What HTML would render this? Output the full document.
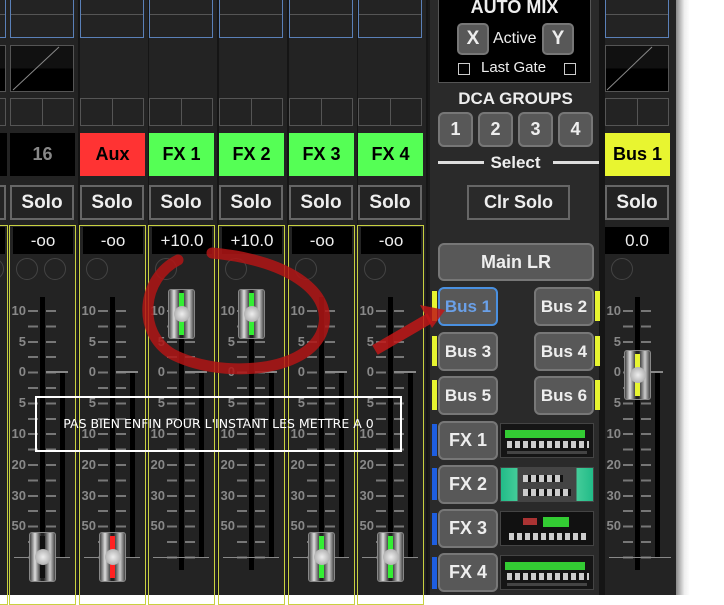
<!DOCTYPE html>
<html><head><meta charset="utf-8"><style>
*{margin:0;padding:0;box-sizing:border-box}
body{width:724px;height:595px;overflow:hidden;background:#fff;font-family:"Liberation Sans",sans-serif;position:relative}
.bg{position:absolute;left:0;top:0;width:676px;height:595px;background:#151515}
.shadow{position:absolute;left:676px;top:0;width:14px;height:595px;background:linear-gradient(90deg,#888,#eee 60%,#fff)}
.st{position:absolute;top:0;width:68px;height:595px;background:#232323}
.st>*{position:absolute}
.tb{left:0;top:-2px;width:64px;height:40px;border:1px solid #5a80b8}
.tb:after{content:"";position:absolute;left:0;right:0;top:15px;height:1px;background:#555}
.gr{left:0;top:45px;width:64px;height:47px;border:1px solid #555;background:linear-gradient(#111 50%,#000 50%)}
.tc{left:0;top:98px;width:64px;height:28px;border:1px solid #555}
.tc:after{content:"";position:absolute;left:31px;top:0;bottom:0;width:1px;background:#555}
.lb{left:0;top:133px;width:65px;height:43px;font-weight:bold;font-size:18px;line-height:43px;text-align:center;color:#000}
.so{left:0;top:185px;width:64px;height:35px;border:2px solid #666;color:#eee;font-weight:bold;font-size:19px;line-height:31px;text-align:center}
.yo{left:-1px;top:225px;width:67px;height:380px;border:1px solid #c8d040}
.va{left:3px;top:227px;width:60px;height:27px;background:#000;color:#eee;font-size:17px;line-height:27px;text-align:center}
.ci{left:6px;top:258px;width:22px;height:22px;border:1px solid #444;border-radius:50%}
.tk{left:18px;top:310px;width:10px;height:250px;background:repeating-linear-gradient(#777 0 2px,transparent 2px 15.4px)}
.tk2{left:36px;top:310px;width:10px;height:250px;background:repeating-linear-gradient(#777 0 2px,transparent 2px 15.4px)}
.tr{left:30px;top:297px;width:5px;height:273px;background:#000}
.me{left:50px;top:372px;width:5px;height:186px;background:#000}
.bl{left:4px;top:557px;width:56px;height:1px;background:#888}
.zl{left:36px;top:371px;width:22px;height:2px;background:#888}
.n{color:#888;font-size:13px;font-weight:bold;left:-4px;width:20px;text-align:right}
.fc{left:19px;width:27px;height:50px;border-radius:3px;background:linear-gradient(90deg,#444,#ddd 20%,#222 45%,#222 55%,#ccc 80%,#444);border:1px solid #888}
.fc i{position:absolute;left:10px;top:3px;width:5px;height:42px}
.fc b{position:absolute;left:5px;top:16px;width:16px;height:16px;border-radius:50%;background:radial-gradient(#eee,#999)}
.rp{position:absolute;left:428px;top:0;width:171px;height:595px;background:#2a2a2a;border-left:2px solid #1a1a1a}
.rp>*{position:absolute}
.btn{background:#585858;border:2px solid #777;border-radius:6px;color:#eee;font-weight:bold;text-align:center}
.rk{background:#222;border:1px solid #444;overflow:hidden}
.kn{position:absolute;height:7px;background:repeating-linear-gradient(90deg,#ccc 0 5px,#111 5px 8px)}
</style></head><body>
<div class="bg"></div>

<div class="st" style="left:-58px">
<div class="tb"></div><div class="gr"></div><div class="tc"></div><div class="lb" style="background:#000"></div><div class="so"></div><div class="yo"></div><div class="va"></div><div class="ci" style="left:40px"></div>
<div class="tk2"></div><div class="tr" style="left:53px"></div>
</div>

<div class="st" style="left:10px">
<div class="tb"></div><div class="gr"><svg width="62" height="45" style="position:absolute;left:0;top:0"><line x1="2" y1="44" x2="48" y2="1" stroke="#888"/></svg></div><div class="tc"></div>
<div class="lb" style="background:#000;color:#888">16</div><div class="so">Solo</div><div class="yo"></div><div class="va">-oo</div><div class="ci"></div><div class="ci" style="left:34px"></div>
<div class="tk"></div><div class="tk2"></div><div class="tr"></div><div class="me"></div><div class="bl"></div><div class="zl"></div>
<div class="n" style="top:303px">10</div><div class="n" style="top:334px">5</div><div class="n" style="top:364px">0</div><div class="n" style="top:395px">5</div><div class="n" style="top:426px">10</div><div class="n" style="top:457px">20</div><div class="n" style="top:488px">30</div><div class="n" style="top:518px">50</div>
<div class="fc" style="top:532px"><i style="background:#111"></i><b></b></div>
</div>

<div class="st" style="left:80px">
<div class="tb"></div><div class="tc"></div>
<div class="lb" style="background:#f33">Aux</div><div class="so">Solo</div><div class="yo"></div><div class="va">-oo</div><div class="ci"></div>
<div class="tk"></div><div class="tk2"></div><div class="tr"></div><div class="me"></div><div class="bl"></div><div class="zl"></div>
<div class="n" style="top:303px">10</div><div class="n" style="top:334px">5</div><div class="n" style="top:364px">0</div><div class="n" style="top:395px">5</div><div class="n" style="top:426px">10</div><div class="n" style="top:457px">20</div><div class="n" style="top:488px">30</div><div class="n" style="top:518px">50</div>
<div class="fc" style="top:532px"><i style="background:#f22"></i><b></b></div>
</div>

<div class="st" style="left:149px">
<div class="tb"></div><div class="tc"></div>
<div class="lb" style="background:#5f5">FX 1</div><div class="so">Solo</div><div class="yo"></div><div class="va">+10.0</div><div class="ci"></div>
<div class="tk"></div><div class="tk2"></div><div class="tr"></div><div class="me"></div><div class="bl"></div><div class="zl"></div>
<div class="n" style="top:303px">10</div><div class="n" style="top:334px">5</div><div class="n" style="top:364px">0</div><div class="n" style="top:395px">5</div><div class="n" style="top:426px">10</div><div class="n" style="top:457px">20</div><div class="n" style="top:488px">30</div><div class="n" style="top:518px">50</div>
<div class="fc" style="top:289px"><i style="background:#3e3"></i><b></b></div>
</div>

<div class="st" style="left:219px">
<div class="tb"></div><div class="tc"></div>
<div class="lb" style="background:#5f5">FX 2</div><div class="so">Solo</div><div class="yo"></div><div class="va">+10.0</div><div class="ci"></div>
<div class="tk"></div><div class="tk2"></div><div class="tr"></div><div class="me"></div><div class="bl"></div><div class="zl"></div>
<div class="n" style="top:303px">10</div><div class="n" style="top:334px">5</div><div class="n" style="top:364px">0</div><div class="n" style="top:395px">5</div><div class="n" style="top:426px">10</div><div class="n" style="top:457px">20</div><div class="n" style="top:488px">30</div><div class="n" style="top:518px">50</div>
<div class="fc" style="top:289px"><i style="background:#3e3"></i><b></b></div>
</div>

<div class="st" style="left:289px">
<div class="tb"></div><div class="tc"></div>
<div class="lb" style="background:#5f5">FX 3</div><div class="so">Solo</div><div class="yo"></div><div class="va">-oo</div><div class="ci"></div>
<div class="tk"></div><div class="tk2"></div><div class="tr"></div><div class="me"></div><div class="bl"></div><div class="zl"></div>
<div class="n" style="top:303px">10</div><div class="n" style="top:334px">5</div><div class="n" style="top:364px">0</div><div class="n" style="top:395px">5</div><div class="n" style="top:426px">10</div><div class="n" style="top:457px">20</div><div class="n" style="top:488px">30</div><div class="n" style="top:518px">50</div>
<div class="fc" style="top:532px"><i style="background:#3e3"></i><b></b></div>
</div>

<div class="st" style="left:358px">
<div class="tb"></div><div class="tc"></div>
<div class="lb" style="background:#5f5">FX 4</div><div class="so">Solo</div><div class="yo"></div><div class="va">-oo</div><div class="ci"></div>
<div class="tk"></div><div class="tk2"></div><div class="tr"></div><div class="me"></div><div class="bl"></div><div class="zl"></div>
<div class="n" style="top:303px">10</div><div class="n" style="top:334px">5</div><div class="n" style="top:364px">0</div><div class="n" style="top:395px">5</div><div class="n" style="top:426px">10</div><div class="n" style="top:457px">20</div><div class="n" style="top:488px">30</div><div class="n" style="top:518px">50</div>
<div class="fc" style="top:532px"><i style="background:#3e3"></i><b></b></div>
</div>

<div class="st" style="left:605px;width:71px">
<div class="tb"></div><div class="gr"><svg width="62" height="45" style="position:absolute;left:0;top:0"><line x1="1" y1="44" x2="46" y2="1" stroke="#888"/></svg></div><div class="tc"></div>
<div class="lb" style="background:#e8f530">Bus 1</div><div class="so">Solo</div><div class="va" style="left:0;width:64px">0.0</div><div class="ci"></div>
<div class="tk"></div><div class="tk2"></div><div class="tr"></div><div class="me"></div><div class="bl" style="width:62px"></div><div class="zl"></div>
<div class="n" style="top:303px">10</div><div class="n" style="top:334px">5</div><div class="n" style="top:364px">0</div><div class="n" style="top:395px">5</div><div class="n" style="top:426px">10</div><div class="n" style="top:457px">20</div><div class="n" style="top:488px">30</div><div class="n" style="top:518px">50</div>
<div class="fc" style="top:350px"><i style="background:#e8f530"></i><b></b></div>
</div>

<div class="rp">
<div style="left:8px;top:-5px;width:153px;height:88px;background:#000;border:1px solid #555"></div>
<div style="left:8px;top:-3px;width:153px;text-align:center;color:#eee;font-weight:bold;font-size:18px">AUTO MIX</div>
<div class="btn" style="left:27px;top:23px;width:32px;height:32px;font-size:19px;line-height:28px;border-radius:5px">X</div>
<div style="left:63px;top:30px;color:#eee;font-size:16px">Active</div>
<div class="btn" style="left:112px;top:23px;width:32px;height:32px;font-size:19px;line-height:28px;border-radius:5px">Y</div>
<div style="left:28px;top:63px;width:12px;height:12px;border:1px solid #ccc"></div>
<div style="left:51px;top:59px;color:#eee;font-size:15px">Last Gate</div>
<div style="left:134px;top:63px;width:12px;height:12px;border:1px solid #ccc"></div>
<div style="left:0;top:89px;width:171px;text-align:center;color:#eee;font-weight:bold;font-size:17px">DCA GROUPS</div>
<div class="btn" style="left:8px;top:112px;width:35px;height:35px;font-size:18px;line-height:31px">1</div>
<div class="btn" style="left:48px;top:112px;width:35px;height:35px;font-size:18px;line-height:31px">2</div>
<div class="btn" style="left:88px;top:112px;width:35px;height:35px;font-size:18px;line-height:31px">3</div>
<div class="btn" style="left:128px;top:112px;width:35px;height:35px;font-size:18px;line-height:31px">4</div>
<div style="left:8px;top:161px;width:46px;height:3px;background:#ddd"></div>
<div style="left:0;top:153px;width:171px;text-align:center;color:#eee;font-weight:bold;font-size:17px">Select</div>
<div style="left:123px;top:161px;width:46px;height:3px;background:#ddd"></div>
<div style="left:37px;top:185px;width:103px;height:35px;border:2px solid #666;color:#eee;font-weight:bold;font-size:18px;line-height:31px;text-align:center">Clr Solo</div>
<div class="btn" style="left:8px;top:243px;width:156px;height:38px;font-size:18px;line-height:34px">Main LR</div>

<div style="left:2px;top:291px;width:5px;height:30px;background:#e8f530"></div>
<div class="btn" style="left:8px;top:287px;width:60px;height:39px;font-size:17px;line-height:35px;border-color:#4a90e0;color:#6aa0e8">Bus 1</div>
<div class="btn" style="left:104px;top:287px;width:60px;height:39px;font-size:17px;line-height:35px">Bus 2</div>
<div style="left:165px;top:291px;width:5px;height:30px;background:#e8f530"></div>
<div style="left:2px;top:336px;width:5px;height:30px;background:#e8f530"></div>
<div class="btn" style="left:8px;top:332px;width:60px;height:39px;font-size:17px;line-height:35px">Bus 3</div>
<div class="btn" style="left:104px;top:332px;width:60px;height:39px;font-size:17px;line-height:35px">Bus 4</div>
<div style="left:165px;top:336px;width:5px;height:30px;background:#e8f530"></div>
<div style="left:2px;top:380px;width:5px;height:30px;background:#e8f530"></div>
<div class="btn" style="left:8px;top:376px;width:60px;height:39px;font-size:17px;line-height:35px">Bus 5</div>
<div class="btn" style="left:104px;top:376px;width:60px;height:39px;font-size:17px;line-height:35px">Bus 6</div>
<div style="left:165px;top:380px;width:5px;height:30px;background:#e8f530"></div>

<div style="left:2px;top:424px;width:5px;height:32px;background:#1e5ee0"></div>
<div class="btn" style="left:8px;top:421px;width:60px;height:39px;font-size:18px;line-height:35px">FX 1</div>
<div class="rk" style="left:70px;top:423px;width:94px;height:35px;background:#151515"><div style="position:absolute;left:4px;top:6px;width:80px;height:8px;background:#3c3"></div><div class="kn" style="left:6px;top:17px;width:82px"></div><div style="position:absolute;left:6px;top:27px;width:80px;height:3px;background:#444"></div></div>
<div style="left:2px;top:468px;width:5px;height:32px;background:#1e5ee0"></div>
<div class="btn" style="left:8px;top:465px;width:60px;height:39px;font-size:18px;line-height:35px">FX 2</div>
<div class="rk" style="left:70px;top:467px;width:94px;height:35px;background:linear-gradient(90deg,#2b8 0%,#4c9 18%,#444 18%,#444 82%,#4c9 82%,#2b8)"><div class="kn" style="left:22px;top:7px;width:40px"></div><div class="kn" style="left:22px;top:21px;width:48px"></div></div>
<div style="left:2px;top:513px;width:5px;height:32px;background:#1e5ee0"></div>
<div class="btn" style="left:8px;top:509px;width:60px;height:39px;font-size:18px;line-height:35px">FX 3</div>
<div class="rk" style="left:70px;top:511px;width:94px;height:35px;background:#111"><div style="position:absolute;left:22px;top:6px;width:14px;height:7px;background:#a33"></div><div style="position:absolute;left:42px;top:5px;width:26px;height:10px;background:#3c3"></div><div class="kn" style="left:8px;top:21px;width:80px"></div></div>
<div style="left:2px;top:557px;width:5px;height:32px;background:#1e5ee0"></div>
<div class="btn" style="left:8px;top:553px;width:60px;height:39px;font-size:18px;line-height:35px">FX 4</div>
<div class="rk" style="left:70px;top:555px;width:94px;height:35px;background:#151515"><div style="position:absolute;left:4px;top:6px;width:80px;height:8px;background:#3c3"></div><div class="kn" style="left:6px;top:17px;width:82px"></div><div style="position:absolute;left:6px;top:27px;width:80px;height:3px;background:#444"></div></div>
</div>

<div class="shadow"></div>

<svg width="724" height="595" style="position:absolute;left:0;top:0">
<path d="M178 260 C142 278 136 332 172 354 C218 378 302 374 321 334 C338 296 292 260 212 253" fill="none" stroke="#b01515" stroke-width="11" opacity="0.85" stroke-linecap="round"/>
<path d="M375 350 L430 318" stroke="#c01818" stroke-width="11" opacity="0.85"/>
<path d="M420 305 L445 310 L432 328 Z" fill="#c01818" opacity="0.85"/>
</svg>
<div style="position:absolute;left:35px;top:396px;width:367px;height:56px;border:2px solid #fff;color:#fff;font-family:'DejaVu Sans',sans-serif;font-size:12.5px;line-height:52px;text-align:center">PAS BIEN ENFIN POUR L'INSTANT LES METTRE A 0</div>
</body></html>
